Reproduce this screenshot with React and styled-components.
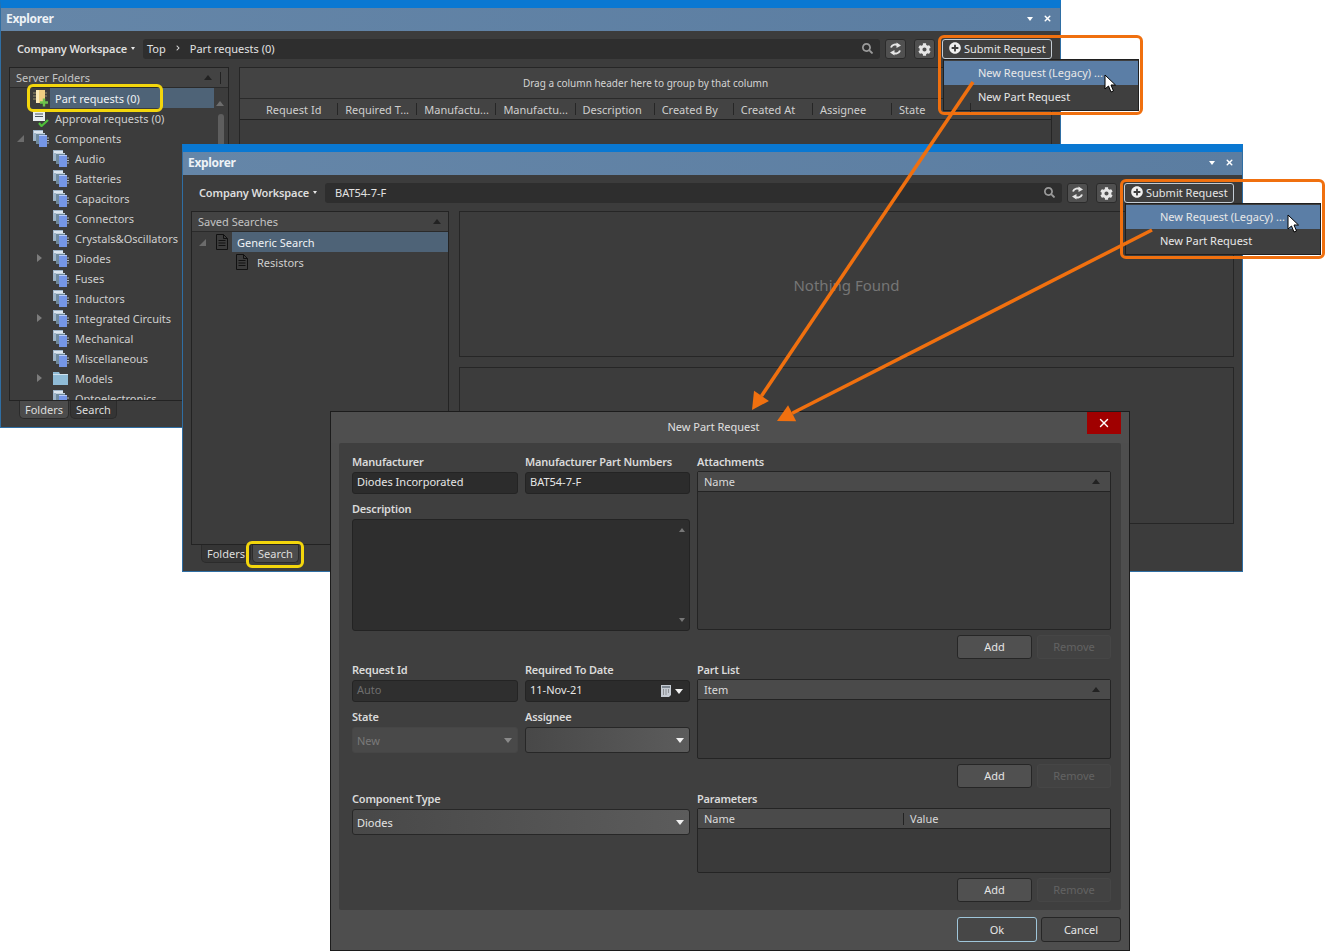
import React from "react";
import styled, { createGlobalStyle } from "styled-components";
import { FaChevronRight, FaCog, FaPlusCircle, FaSearch } from "react-icons/fa";
import { X } from "lucide-react";

const GlobalStyle = createGlobalStyle`
  html, body { margin: 0; padding: 0; background: #fff; }
  * { box-sizing: border-box; }
  body {
    font-family: "Noto Sans", "Open Sans", "Liberation Sans", sans-serif;
    font-size: 11px;
    color: #dcdcdc;
  }
`;

const Canvas = styled.div`
  position: relative;
  width: 1326px;
  height: 951px;
  overflow: hidden;
  background: #fff;
`;

/* ---------- explorer window ---------- */

const Window = styled.div`
  position: absolute;
  left: ${(p) => p.$x}px;
  top: ${(p) => p.$y}px;
  width: 1061px;
  height: 428px;
  display: flex;
  flex-direction: column;
  background: #3c3c3c;
  border: 1px solid #2f6ea3;
  border-top: 8px solid #0a78d2;
`;

const TitleBar = styled.div`
  height: 23px;
  flex: none;
  display: flex;
  align-items: center;
  justify-content: space-between;
  padding: 0 8px 2px 5px;
  background: linear-gradient(90deg, #6586a8, #5b7da1);
  font-size: 12px;
  font-weight: 700;
  letter-spacing: -0.3px;
  color: #eef2f6;
`;

const TitleControls = styled.div`
  display: flex;
  align-items: center;
  gap: 10px;
  color: #fff;
`;

const Tri = styled.span`
  display: inline-block;
  width: 0;
  height: 0;
  flex: none;
  border-left: ${(p) => p.$size || 3}px solid transparent;
  border-right: ${(p) => p.$size || 3}px solid transparent;
  ${(p) => (p.$up ? "border-bottom" : "border-top")}: ${(p) => (p.$size || 3) + 1}px solid ${(p) => p.$color || "#e8e8e8"};
`;

const Toolbar = styled.div`
  height: 36px;
  flex: none;
  display: flex;
  align-items: flex-start;
  padding: 8px 8px 0 16px;
`;

const WorkspacePicker = styled.div`
  width: 126px;
  height: 20px;
  flex: none;
  display: flex;
  align-items: center;
  gap: 4px;
  padding-bottom: 2px;
  font-weight: 600;
  letter-spacing: -0.15px;
  color: #dedede;
`;

const PathBox = styled.div`
  flex: 1;
  height: 20px;
  display: flex;
  align-items: center;
  padding: 0 7px 2px ${(p) => p.$pad}px;
  gap: 9px;
  background: #2e2e2e;
  border-radius: 3px;
  color: #e2e2e2;
`;

const PathSpacer = styled.span`
  flex: 1;
`;

const ToolButton = styled.div`
  width: 21px;
  height: 20px;
  flex: none;
  margin-left: ${(p) => p.$gap}px;
  display: flex;
  align-items: center;
  justify-content: center;
  background: #505050;
  border: 1px solid #2b2b2b;
  border-radius: 3px;
  color: #e6e6e6;
`;

const SubmitWrap = styled.div`
  position: relative;
  width: 110px;
  height: 20px;
  flex: none;
  margin-left: 7px;
`;

const SubmitButton = styled.div`
  height: 20px;
  display: flex;
  align-items: center;
  gap: 3px;
  padding: 0 0 2px 6px;
  background: #3f3f3f;
  border: 1px solid #c4ccd4;
  border-radius: 3px;
  color: #e6e6e6;
`;

const Menu = styled.div`
  position: absolute;
  top: 20px;
  left: 1px;
  width: 196px;
  height: 52px;
  padding: 1px 0;
  background: #3f3f3f;
  border: 1px solid #1f1f1f;
`;

const MenuItem = styled.div`
  height: 24px;
  display: flex;
  align-items: center;
  padding: 0 0 2px 34px;
  background: ${(p) => (p.$active ? "#5b7ea6" : "transparent")};
  color: #e8e8e8;
`;

const WindowBody = styled.div`
  flex: 1;
  min-height: 0;
  display: flex;
  gap: 10px;
  padding: 0 8px;
`;

const LeftColumn = styled.div`
  width: ${(p) => p.$w}px;
  flex: none;
  display: flex;
  flex-direction: column;
`;

const TreePanel = styled.div`
  position: relative;
  height: 334px;
  flex: none;
  overflow: hidden;
  border: 1px solid #232323;
`;

const TreeHeader = styled.div`
  height: 20px;
  display: flex;
  align-items: center;
  padding: 0 7px 0 6px;
  gap: 8px;
  border-bottom: 1px solid #2a2a2a;
  background: #434343;
  color: #c4c4c4;
`;

const HeaderText = styled.span`
  flex: 1;
`;

const HeaderRule = styled.span`
  width: 1px;
  height: 12px;
  background: #222;
`;

const TreeRow = styled.div`
  height: 20px;
  display: flex;
  align-items: stretch;
  padding-left: ${(p) => 4 + p.$depth * 20}px;
`;

const ArrowSlot = styled.div`
  width: 19px;
  flex: none;
  display: flex;
  align-items: center;
  padding-left: 3px;
`;

const ClosedArrow = styled.span`
  width: 0;
  height: 0;
  border-top: 4px solid transparent;
  border-bottom: 4px solid transparent;
  border-left: 5px solid #7c7c7c;
`;

const OpenArrow = styled.span`
  width: 0;
  height: 0;
  border-bottom: 7px solid #6c6c6c;
  border-left: 7px solid transparent;
`;

const IconSlot = styled.div`
  width: 17px;
  flex: none;
  display: flex;
  align-items: center;
`;

const TreeLabel = styled.div`
  flex: 1;
  display: flex;
  align-items: center;
  padding-left: 5px;
  margin-right: ${(p) => p.$inset}px;
  white-space: nowrap;
  background: ${(p) => (p.$selected ? "#4e6377" : "transparent")};
  color: ${(p) => (p.$selected ? "#eef2f5" : "#cfcfcf")};
`;

const ScrollUp = styled.div`
  position: absolute;
  top: 26px;
  right: 4px;
`;

const ScrollThumb = styled.div`
  position: absolute;
  top: 46px;
  right: 4px;
  width: 6px;
  height: 90px;
  border-radius: 3px;
  background: #5e5e5e;
`;

const TabBar = styled.div`
  display: flex;
  gap: 1px;
  padding-left: 10px;
`;

const Tab = styled.div`
  height: 18px;
  display: flex;
  align-items: center;
  padding: 0 5px;
  border-radius: 0 0 5px 5px;
  border: 1px solid #2b2b2b;
  border-top: 0;
  background: ${(p) => (p.$active ? "#4c4c4c" : "#353535")};
  color: #dedede;
`;

const RightColumn = styled.div`
  flex: 1;
  min-width: 0;
  display: flex;
  flex-direction: column;
  gap: 10px;
`;

const GridPanel = styled.div`
  height: ${(p) => p.$h}px;
  flex: none;
  border: 1px solid #262626;
  background: #3c3c3c;
`;

const GroupHint = styled.div`
  height: 31px;
  display: flex;
  align-items: center;
  justify-content: center;
  padding-bottom: 1px;
  background: #434343;
  border-bottom: 1px solid #2a2a2a;
  font-size: 10px;
  color: #d4d4d4;
`;

const ColumnRow = styled.div`
  height: 21px;
  display: flex;
  padding-left: 19px;
  background: #434343;
  border-bottom: 1px solid #222;
`;

const ColumnHead = styled.div`
  position: relative;
  width: 79.125px;
  flex: none;
  display: flex;
  align-items: center;
  padding-left: 7px;
  color: #cfcfcf;
  white-space: nowrap;
  &::after {
    content: "";
    position: absolute;
    right: 0;
    top: 4px;
    bottom: 4px;
    width: 1px;
    background: #262626;
  }
`;

const NothingFound = styled.div`
  height: 100%;
  display: flex;
  align-items: center;
  justify-content: center;
  padding-top: 1px;
  font-size: 15px;
  color: #767676;
`;

/* ---------- dialog ---------- */

const Dialog = styled.div`
  position: absolute;
  left: 330px;
  top: 411px;
  width: 800px;
  height: 540px;
  display: flex;
  flex-direction: column;
  background: #4e4e4e;
  border: 1px solid #1c1c1c;
`;

const DialogTitle = styled.div`
  position: relative;
  height: 31px;
  flex: none;
  display: flex;
  align-items: center;
  justify-content: center;
  padding: 0 33px 2px 0;
  font-size: 11px;
  color: #e0e0e0;
  background: #4f4f4f;
`;

const CloseButton = styled.div`
  position: absolute;
  top: 0;
  right: 8px;
  width: 34px;
  height: 22px;
  display: flex;
  align-items: center;
  justify-content: center;
  background: #a00000;
  color: #fff;
`;

const DialogPanel = styled.div`
  height: 467px;
  flex: none;
  margin: 0 8px;
  padding: 10px 10px 0 13px;
  display: grid;
  grid-template-columns: 338px 414px;
  column-gap: 7px;
  background: #3f3f3f;
  border-radius: 2px;
`;

const FormColumn = styled.div`
  display: flex;
  flex-direction: column;
`;

const FieldRow = styled.div`
  display: grid;
  grid-template-columns: 166px 165px;
  column-gap: 7px;
  margin-top: ${(p) => p.$top || 0}px;
`;

const Field = styled.div`
  margin-top: ${(p) => p.$top || 0}px;
`;

const FieldLabel = styled.div`
  height: ${(p) => p.$h || 19}px;
  display: flex;
  align-items: center;
  padding-bottom: 2px;
  font-weight: 600;
  letter-spacing: -0.2px;
  color: #dadada;
`;

const Input = styled.div`
  height: 22px;
  display: flex;
  align-items: center;
  justify-content: space-between;
  padding: 0 6px 3px 4px;
  background: ${(p) => (p.$dim ? "#2f2f2f" : "#2c2c2c")};
  border: 1px solid #242424;
  border-radius: 3px;
  color: ${(p) => (p.$dim ? "#6e6e6e" : "#e6e6e6")};
`;

const DateIcons = styled.div`
  display: flex;
  align-items: center;
  gap: 4px;
  padding-top: 3px;
`;

const TextArea = styled.div`
  height: 112px;
  display: flex;
  flex-direction: column;
  justify-content: space-between;
  align-items: flex-end;
  padding: 8px 4px 8px 0;
  background: #2e2e2e;
  border: 1px solid #232323;
  border-radius: 3px;
`;

const Select = styled.div`
  height: 26px;
  display: flex;
  align-items: center;
  justify-content: space-between;
  padding: 0 5px 0 4px;
  border-radius: 3px;
  border: 1px solid ${(p) => (p.$disabled ? "#464646" : "#272727")};
  background: ${(p) =>
    p.$disabled ? "#494949" : "linear-gradient(90deg, #484848, #5c5c5c)"};
  color: ${(p) => (p.$disabled ? "#7a7a7a" : "#e4e4e4")};
`;

const ListTable = styled.div`
  height: ${(p) => p.$h}px;
  border: 1px solid #242424;
  border-radius: 2px;
  background: #3a3a3a;
`;

const ListHead = styled.div`
  height: 20px;
  display: flex;
  align-items: center;
  padding: 0 10px 0 6px;
  background: #4a4a4a;
  border-bottom: 1px solid #232323;
  color: #dadada;
`;

const ListCell = styled.span`
  flex: ${(p) => (p.$fixed ? "none" : 1)};
  width: ${(p) => (p.$fixed ? `${p.$fixed}px` : "auto")};
  ${(p) => p.$rule && "border-right: 1px solid #222; height: 12px; line-height: 12px;"}
  ${(p) => p.$after && "padding-left: 6px;"}
`;

const ButtonRow = styled.div`
  display: flex;
  justify-content: flex-end;
  gap: 5px;
  margin-top: 5px;
`;

const DialogButton = styled.div`
  width: ${(p) => p.$w || 74}px;
  height: 24px;
  display: flex;
  align-items: center;
  justify-content: center;
  padding-bottom: 1px;
  border-radius: 3px;
  border: 1px solid ${(p) => (p.$disabled ? "#464646" : "#262626")};
  background: ${(p) => (p.$disabled ? "#424242" : "#505050")};
  color: ${(p) => (p.$disabled ? "#626262" : "#e4e4e4")};
`;

const DialogFooter = styled.div`
  flex: 1;
  display: flex;
  justify-content: flex-end;
  gap: 4px;
  padding: 7px 8px 0 0;
`;

const FooterButton = styled.div`
  width: 80px;
  height: 25px;
  display: flex;
  align-items: center;
  justify-content: center;
  border-radius: 3px;
  border: 1px solid ${(p) => (p.$primary ? "#9fc6da" : "#262626")};
  background: #474747;
  color: #e8e8e8;
`;

/* ---------- annotations ---------- */

const Callout = styled.div`
  position: absolute;
  left: ${(p) => p.$x}px;
  top: ${(p) => p.$y}px;
  width: ${(p) => p.$w}px;
  height: ${(p) => p.$h}px;
  border: 3px solid ${(p) => p.$color};
  border-radius: 6px;
`;

const Overlay = styled.svg`
  position: absolute;
  left: 0;
  top: 0;
  pointer-events: none;
`;

/* ---------- drawings ---------- */

const StackIcon = () => (
  <svg width="16" height="17" viewBox="0 0 16 17">
    <rect x="0" y="0" width="10" height="11" fill="#9fb5c9" />
    <rect x="1" y="1" width="9" height="2" fill="#dbe5ee" />
    <rect x="3" y="3" width="9" height="11" fill="#6f8a9e" />
    <rect x="3" y="3" width="9" height="1" fill="#c3d2de" />
    <rect x="6" y="5" width="8" height="12" fill="#7596e6" />
    <rect x="6" y="5" width="8" height="1" fill="#b7c9f4" />
    <path d="M14 8h2M14 10.500h2M14 13h2" stroke="#aeb8c2" />
  </svg>
);

const FolderIcon = () => (
  <svg width="15" height="14" viewBox="0 0 15 14">
    <path d="M0 1h6l1 2h8v11H0z" fill="#8fbbd6" />
    <path d="M0 3h15v1H0z" fill="#cfe2ee" />
  </svg>
);

const ChipAddIcon = () => (
  <svg width="16" height="18" viewBox="0 0 16 18">
    <rect x="3" y="1" width="9" height="13" fill="#f0cf82" />
    <rect x="3" y="1" width="3" height="13" fill="#fbe9b8" />
    <path d="M0 4h3M0 7h3M0 10h3M12 4h2M12 7h2" stroke="#9c8f6a" />
    <path d="M11 9.500v8M7 13.500h8" stroke="#6dc24b" strokeWidth="2.400" />
  </svg>
);

const ApprovalIcon = () => (
  <svg width="16" height="18" viewBox="0 0 16 18">
    <rect x="0" y="0" width="12" height="12" fill="#e8edf2" />
    <path d="M2 2.500h8M2 5h8M2 7.500h8" stroke="#4c5560" />
    <path d="M6 14l2.500 3L15 11" fill="none" stroke="#4fbf3a" strokeWidth="2.200" />
  </svg>
);

const DocIcon = () => (
  <svg width="14" height="16" viewBox="0 0 14 16">
    <path d="M1.500.500h7l4 4v11h-11z" fill="none" stroke="#111" />
    <path d="M8.500.500v4h4M3.500 6.500h7M3.500 9h7M3.500 11.500h7" fill="none" stroke="#111" />
  </svg>
);

const SyncIcon = () => (
  <svg width="13" height="14" viewBox="0 0 13 14">
    <path d="M2 5.500C3 2.500 7 1.500 9.500 3.500" fill="none" stroke="currentColor" strokeWidth="2" />
    <path d="M7.500 0.500L12 3.500 7.500 6z" fill="currentColor" />
    <path d="M11 8.500C10 11.500 6 12.500 3.500 10.500" fill="none" stroke="currentColor" strokeWidth="2" />
    <path d="M5.500 13.500L1 10.500 5.500 8z" fill="currentColor" />
  </svg>
);

const CalendarIcon = () => (
  <svg width="10" height="12" viewBox="0 0 10 12">
    <path d="M0 0h10v10l-2 2H0z" fill="#c6ccd4" />
    <rect x="1" y="1" width="8" height="2" fill="#7e8791" />
    <path d="M2 5h1M4.500 5h1M7 5h1M2 7h1M4.500 7h1M7 7h1M2 9h1M4.500 9h1" stroke="#555" />
  </svg>
);

const CursorPath = ({ x, y }) => (
  <path
    transform={`translate(${x} ${y})`}
    d="M0 0v14l3.500-3 2.500 6 2.500-1-2.500-6h4.500z"
    fill="#fff"
    stroke="#000"
    strokeWidth="1"
  />
);

const Arrow = ({ from, to }) => {
  const dx = to[0] - from[0];
  const dy = to[1] - from[1];
  const len = Math.hypot(dx, dy);
  const ux = dx / len;
  const uy = dy / len;
  const bx = to[0] - ux * 17;
  const by = to[1] - uy * 17;
  const head = [
    to,
    [bx - uy * 9, by + ux * 9],
    [bx + uy * 9, by - ux * 9],
  ];
  return (
    <>
      <line x1={from[0]} y1={from[1]} x2={bx} y2={by} stroke="#f0700f" strokeWidth="3.500" />
      <polygon points={head.map((p) => p.join(",")).join(" ")} fill="#f0700f" />
    </>
  );
};

/* ---------- data ---------- */

const serverFolders = [
  { label: "Part requests (0)", icon: <ChipAddIcon />, depth: 0, selected: true },
  { label: "Approval requests (0)", icon: <ApprovalIcon />, depth: 0 },
  { label: "Components", icon: <StackIcon />, depth: 0, arrow: "open" },
  { label: "Audio", icon: <StackIcon />, depth: 1 },
  { label: "Batteries", icon: <StackIcon />, depth: 1 },
  { label: "Capacitors", icon: <StackIcon />, depth: 1 },
  { label: "Connectors", icon: <StackIcon />, depth: 1 },
  { label: "Crystals&Oscillators", icon: <StackIcon />, depth: 1 },
  { label: "Diodes", icon: <StackIcon />, depth: 1, arrow: "closed" },
  { label: "Fuses", icon: <StackIcon />, depth: 1 },
  { label: "Inductors", icon: <StackIcon />, depth: 1 },
  { label: "Integrated Circuits", icon: <StackIcon />, depth: 1, arrow: "closed" },
  { label: "Mechanical", icon: <StackIcon />, depth: 1 },
  { label: "Miscellaneous", icon: <StackIcon />, depth: 1 },
  { label: "Models", icon: <FolderIcon />, depth: 1, arrow: "closed" },
  { label: "Optoelectronics", icon: <StackIcon />, depth: 1 },
];

const savedSearches = [
  { label: "Generic Search", icon: <DocIcon />, depth: 0, arrow: "open", selected: true },
  { label: "Resistors", icon: <DocIcon />, depth: 1 },
];

const columns = [
  "Request Id",
  "Required T...",
  "Manufactu...",
  "Manufactu...",
  "Description",
  "Created By",
  "Created At",
  "Assignee",
  "State",
];

/* ---------- parts ---------- */

const Tree = ({ title, rows, rule, inset, scroll }) => (
  <TreePanel>
    <TreeHeader>
      <HeaderText>{title}</HeaderText>
      <Tri $up $size={4} $color="#222" />
      {rule && <HeaderRule />}
    </TreeHeader>
    {rows.map((row) => (
      <TreeRow key={row.label} $depth={row.depth}>
        <ArrowSlot>
          {row.arrow === "open" && <OpenArrow />}
          {row.arrow === "closed" && <ClosedArrow />}
        </ArrowSlot>
        <IconSlot>{row.icon}</IconSlot>
        <TreeLabel $selected={row.selected} $inset={row.selected ? inset : 0}>
          {row.label}
        </TreeLabel>
      </TreeRow>
    ))}
    {scroll && (
      <>
        <ScrollUp>
          <Tri $up $size={4} $color="#6e6e6e" />
        </ScrollUp>
        <ScrollThumb />
      </>
    )}
  </TreePanel>
);

const ExplorerToolbar = ({ pad, children }) => (
  <Toolbar>
    <WorkspacePicker>
      Company Workspace <Tri $size={2} />
    </WorkspacePicker>
    <PathBox $pad={pad}>
      {children}
      <PathSpacer />
      <FaSearch size={11} color="#9a9a9a" />
    </PathBox>
    <ToolButton $gap={5}>
      <SyncIcon />
    </ToolButton>
    <ToolButton $gap={8}>
      <FaCog size={13} />
    </ToolButton>
    <SubmitWrap>
      <SubmitButton>
        <FaPlusCircle size={12} color="#f0f0f0" />
        Submit Request
      </SubmitButton>
      <Menu>
        <MenuItem $active>New Request (Legacy) ...</MenuItem>
        <MenuItem>New Part Request</MenuItem>
      </Menu>
    </SubmitWrap>
  </Toolbar>
);

const Title = () => (
  <TitleBar>
    Explorer
    <TitleControls>
      <Tri $size={3} $color="#fff" />
      <X size={9} strokeWidth={4} />
    </TitleControls>
  </TitleBar>
);

const AddRemove = () => (
  <ButtonRow>
    <DialogButton $w={75}>Add</DialogButton>
    <DialogButton $disabled>Remove</DialogButton>
  </ButtonRow>
);

const App = () => (
  <Canvas>
    <GlobalStyle />

    <Window $x={0} $y={0}>
      <Title />
      <ExplorerToolbar pad={4}>
        Top <FaChevronRight size={6} color="#d8d8d8" /> Part requests (0)
      </ExplorerToolbar>
      <WindowBody>
        <LeftColumn $w={220}>
          <Tree title="Server Folders" rows={serverFolders} rule inset={14} scroll />
          <TabBar>
            <Tab $active>Folders</Tab>
            <Tab>Search</Tab>
          </TabBar>
        </LeftColumn>
        <RightColumn>
          <GridPanel $h={334}>
            <GroupHint>Drag a column header here to group by that column</GroupHint>
            <ColumnRow>
              {columns.map((name, i) => (
                <ColumnHead key={i}>{name}</ColumnHead>
              ))}
            </ColumnRow>
          </GridPanel>
        </RightColumn>
      </WindowBody>
    </Window>

    <Window $x={182} $y={144}>
      <Title />
      <ExplorerToolbar pad={10}>BAT54-7-F</ExplorerToolbar>
      <WindowBody>
        <LeftColumn $w={258}>
          <Tree title="Saved Searches" rows={savedSearches} inset={0} />
          <TabBar>
            <Tab>Folders</Tab>
            <Tab $active>Search</Tab>
          </TabBar>
        </LeftColumn>
        <RightColumn>
          <GridPanel $h={146}>
            <NothingFound>Nothing Found</NothingFound>
          </GridPanel>
          <GridPanel $h={157} />
        </RightColumn>
      </WindowBody>
    </Window>

    <Dialog>
      <DialogTitle>
        New Part Request
        <CloseButton>
          <X size={14} strokeWidth={2.4} />
        </CloseButton>
      </DialogTitle>
      <DialogPanel>
        <FormColumn>
          <FieldRow>
            <div>
              <FieldLabel>Manufacturer</FieldLabel>
              <Input>Diodes Incorporated</Input>
            </div>
            <div>
              <FieldLabel>Manufacturer Part Numbers</FieldLabel>
              <Input>BAT54-7-F</Input>
            </div>
          </FieldRow>
          <Field $top={6}>
            <FieldLabel>Description</FieldLabel>
            <TextArea>
              <Tri $up $size={3} $color="#777" />
              <Tri $size={3} $color="#777" />
            </TextArea>
          </Field>
          <FieldRow $top={30}>
            <div>
              <FieldLabel>Request Id</FieldLabel>
              <Input $dim>Auto</Input>
            </div>
            <div>
              <FieldLabel>Required To Date</FieldLabel>
              <Input>
                11-Nov-21
                <DateIcons>
                  <CalendarIcon />
                  <Tri $size={4} $color="#f0f0f0" />
                </DateIcons>
              </Input>
            </div>
          </FieldRow>
          <FieldRow $top={6}>
            <div>
              <FieldLabel>State</FieldLabel>
              <Select $disabled>
                New
                <Tri $size={4} $color="#8a8a8a" />
              </Select>
            </div>
            <div>
              <FieldLabel>Assignee</FieldLabel>
              <Select>
                <span />
                <Tri $size={4} $color="#f0f0f0" />
              </Select>
            </div>
          </FieldRow>
          <Field $top={37}>
            <FieldLabel>Component Type</FieldLabel>
            <Select>
              Diodes
              <Tri $size={4} $color="#f0f0f0" />
            </Select>
          </Field>
        </FormColumn>

        <FormColumn>
          <FieldLabel $h={18}>Attachments</FieldLabel>
          <ListTable $h={159}>
            <ListHead>
              <ListCell>Name</ListCell>
              <Tri $up $size={4} $color="#222" />
            </ListHead>
          </ListTable>
          <AddRemove />
          <Field $top={2}>
            <FieldLabel $h={18}>Part List</FieldLabel>
            <ListTable $h={80}>
              <ListHead>
                <ListCell>Item</ListCell>
                <Tri $up $size={4} $color="#222" />
              </ListHead>
            </ListTable>
          </Field>
          <AddRemove />
          <Field $top={2}>
            <FieldLabel $h={18}>Parameters</FieldLabel>
            <ListTable $h={65}>
              <ListHead>
                <ListCell $fixed={200} $rule>Name</ListCell>
                <ListCell $after>Value</ListCell>
              </ListHead>
            </ListTable>
          </Field>
          <AddRemove />
        </FormColumn>
      </DialogPanel>
      <DialogFooter>
        <FooterButton $primary>Ok</FooterButton>
        <FooterButton>Cancel</FooterButton>
      </DialogFooter>
    </Dialog>

    <Callout $x={938} $y={35} $w={205} $h={80} $color="#f0700f" />
    <Callout $x={1120} $y={179} $w={205} $h={80} $color="#f0700f" />
    <Callout $x={27} $y={84} $w={136} $h={28} $color="#f3d60c" />
    <Callout $x={246} $y={541} $w={58} $h={27} $color="#f3d60c" />

    <Overlay width="1326" height="951" viewBox="0 0 1326 951">
      <Arrow from={[973, 82]} to={[752, 410]} />
      <Arrow from={[1152, 230]} to={[777, 421]} />
      <CursorPath x={1105} y={75} />
      <CursorPath x={1288} y={215} />
    </Overlay>
  </Canvas>
);

export default App;
